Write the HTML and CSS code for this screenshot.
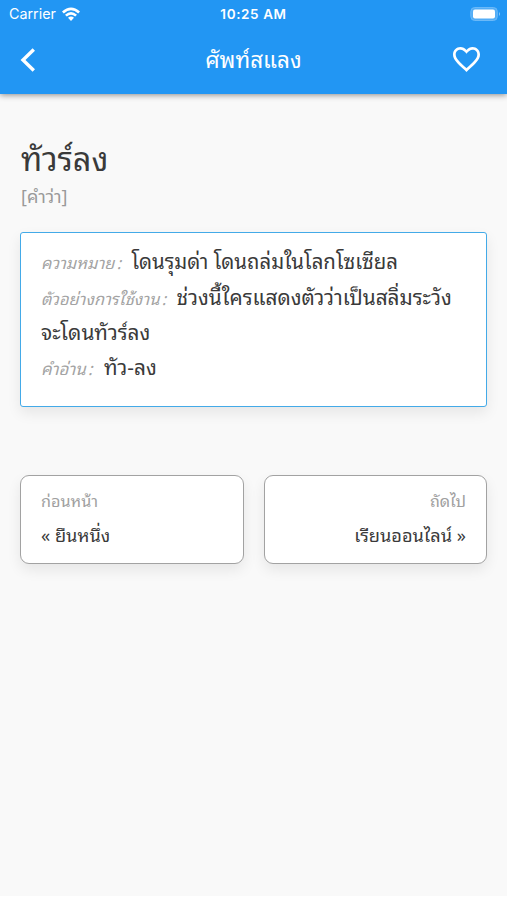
FILE: index.html
```html
<!DOCTYPE html>
<html lang="th"><head><meta charset="utf-8"><title>ศัพท์สแลง</title><link rel="stylesheet" href="styles.css"></head>
<body>
<header class="top">
<div class="status"><span class="carrier">Carrier <svg width="18" height="14" viewBox="0 0 18 14"><path d="M0 4.6Q9-3.6 18 4.6L16.2 6.5Q9 0 1.8 6.5Z M3 7.7Q9 2.4 15 7.7L13.2 9.5Q9 6 4.8 9.5Z M6 10.8Q9 8.3 12 10.8L9 14Z" fill="#fff"/></svg></span><span class="time">10:25 AM</span><svg class="battery" width="31" height="14" viewBox="0 0 31 14"><rect x=".8" y=".5" width="26.5" height="13" rx="4" fill="#53adf6" stroke="#6bb9f8"/><rect x="3" y="2.5" width="22" height="9" rx="2" fill="#fff"/><path d="M29 5q2 2 0 4z" fill="#8dc8f9"/></svg></div>
<div class="bar"><svg class="back" width="16" height="24" viewBox="0 0 16 24"><path d="M13.8 1.5L3 12L13.8 22.5" fill="none" stroke="#fff" stroke-width="3.4"/></svg><h1>ศัพท์สแลง</h1><svg class="heart" width="27" height="25" viewBox="2 3 20 18.35"><path fill="#fff" d="M16.5 3c-1.74 0-3.41.81-4.5 2.09C10.91 3.81 9.24 3 7.5 3 4.42 3 2 5.42 2 8.5c0 3.78 3.4 6.86 8.55 11.54L12 21.35l1.45-1.32C18.6 15.36 22 12.28 22 8.5 22 5.42 19.58 3 16.5 3zm-4.4 15.55l-.1.1-.1-.1C7.14 14.24 4 11.39 4 8.5 4 6.5 5.5 5 7.5 5c1.54 0 3.54 1.6 4.5 3 .96-1.4 2.96-3 4.5-3 2 0 3.5 1.5 3.5 3.5 0 2.89-3.14 5.74-7.9 10.05z"/></svg></div>
</header>
<main>
<h2>ทัวร์ลง</h2>
<p class="kind">[คำว่า]</p>
<section class="card">
<p class="meaning"><i>ความหมาย :</i> โดนรุมด่า โดนถล่มในโลกโซเซียล</p>
<p><i>ตัวอย่างการใช้งาน :</i> ช่วงนี้ใครแสดงตัวว่าเป็นสลิ่มระวัง<br>จะโดนทัวร์ลง</p>
<p class="reading"><i>คำอ่าน :</i> ทัว-ลง</p>
</section>
<nav><a><small>ก่อนหน้า</small><span>« ยืนหนึ่ง</span></a><a class="next"><small>ถัดไป</small><span>เรียนออนไลน์ »</span></a></nav>
</main>
</body></html>
```
FILE: styles.css
```css
*{box-sizing:border-box}
html{background:#fff}
body{margin:0;height:896px;background:#f9f9f9;color:#3a3a3a;font-family:"Noto Sans Thai Looped","Noto Looped Thai",Loma,Garuda,Waree,"Noto Sans Thai","Noto Sans",sans-serif}
h1,h2,p{margin:0;font-weight:400}
svg{display:block}
.top{height:94px;background:#2296f3;color:#fff;box-shadow:0 1px 6px rgba(0,0,0,.45)}
.status{height:27px;display:grid;grid-template-columns:1fr auto 1fr;align-items:center;padding:0 6px 0 9px;font:14.3px Inter,sans-serif}
.carrier{display:flex;align-items:center;gap:6px}
.time{font-weight:600;font-size:13.5px;letter-spacing:.6px;margin-left:-3px}
.battery{justify-self:end}
.bar{height:65px;display:grid;grid-template-columns:32px 1fr 32px;align-items:center;padding:0 24px 0 20px}
.heart{margin-left:2px}
h1{text-align:center;font-size:22.5px;padding:0 0 3px 4px}
main{padding:38px 20px 0}
h2{font-size:32.5px;line-height:48px;padding-left:1px}
.kind{font-size:18px;line-height:30px;color:#999;padding-left:1px}
.card{margin-top:22px;height:175px;border:1px solid #43aae8;border-radius:3px;background:#fff;padding:10px 20px;box-shadow:0 6px 14px rgba(0,0,0,.08);font-size:20.8px;line-height:35px;white-space:nowrap}
.meaning{font-size:20.4px}
.card i{font-size:16.4px;line-height:1;color:#a3a3a3;word-spacing:-2px;margin-right:5px}
.card .reading i{font-size:16.8px;margin-right:6px}
nav{margin-top:68px;display:grid;grid-template-columns:1fr 1fr;gap:20px}
nav a{height:89px;border:1px solid #a2a2a2;border-radius:9px;background:#fff;padding:7px 20px 0;display:flex;flex-direction:column;box-shadow:0 6px 14px rgba(0,0,0,.08);font-size:18.2px;line-height:34px}
nav small{font-size:16.2px;color:#a0a0a0}
.next{text-align:right}
```
